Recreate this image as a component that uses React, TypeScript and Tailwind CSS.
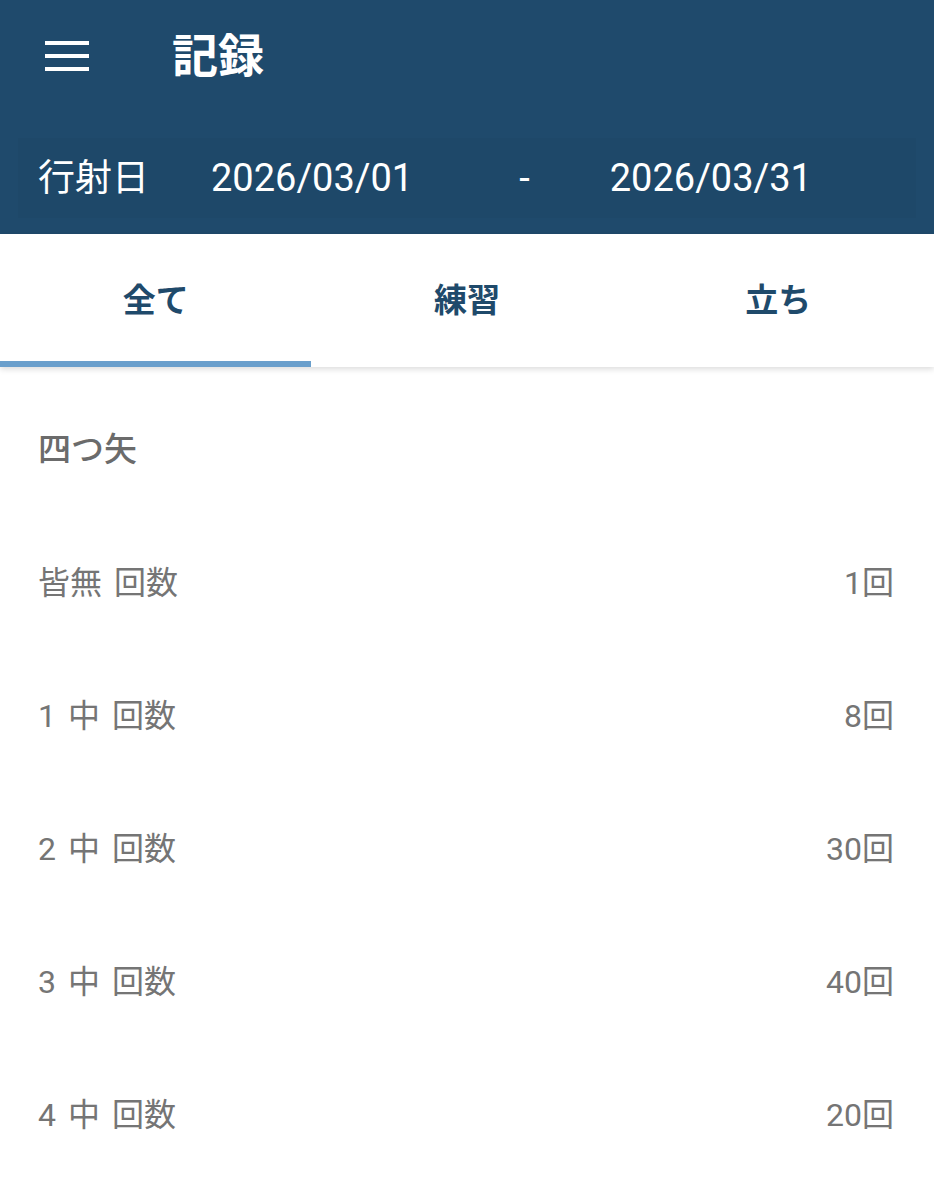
import React from "react";

const rows = [
  { label: "皆無 回数", value: "1回" },
  { label: "1 中 回数", value: "8回" },
  { label: "2 中 回数", value: "30回" },
  { label: "3 中 回数", value: "40回" },
  { label: "4 中 回数", value: "20回" },
];

export default function App() {
  const font = { fontFamily: 'Roboto, "Noto Sans CJK JP", sans-serif' };
  return (
    <div className="w-[934px] h-[1200px] bg-white overflow-hidden" style={font}>
      <header className="bg-[#1f4a6c] h-[234px] flex flex-col">
        <div className="h-[112px] flex items-center pl-[45px]">
          <div className="w-[44px] flex flex-col gap-[9px]">
            <div className="h-[4px] bg-white" />
            <div className="h-[4px] bg-white" />
            <div className="h-[4px] bg-white" />
          </div>
          <div className="ml-[83px] text-white text-[46px] font-bold leading-none">記録</div>
        </div>
        <div className="mt-[26px] mx-[18px] h-[80px] bg-[#1e4869] flex items-center text-white text-[38px] leading-none">
          <span className="ml-[20px] text-[37px]">行射日</span>
          <span className="ml-[62px]">2026/03/01</span>
          <span className="ml-[106px]">-</span>
          <span className="ml-[80px]">2026/03/31</span>
        </div>
      </header>
      <div className="relative z-10 bg-white shadow-[0_2px_6px_rgba(0,0,0,0.15)]">
        <div className="grid grid-cols-3 h-[133px]">
          {["全て", "練習", "立ち"].map((t, i) => (
            <div key={t} className="relative flex items-center justify-center">
              <span className="text-[#1f4a6b] text-[33px] font-bold leading-none">{t}</span>
              {i === 0 && <div className="absolute left-0 right-0 bottom-0 h-[6px] bg-[#6a9fcc]" />}
            </div>
          ))}
        </div>
      </div>
      <div className="pt-[16px]">
        <div className="h-[133px] flex items-center px-[38px] text-[33px] font-medium text-[#6b6b6b] leading-none">
          四つ矢
        </div>
        {rows.map((r) => (
          <div key={r.label} className="h-[133px] flex items-center justify-between pl-[38px] pr-[40px] text-[32px] text-[#757575] leading-none">
            <span className="whitespace-pre">{r.label.split(" ").map((w, i, a) => (
              <React.Fragment key={i}>
                {w}
                {i < a.length - 1 && <span className="inline-block w-[12px]" />}
              </React.Fragment>
            ))}</span>
            <span>{r.value}</span>
          </div>
        ))}
      </div>
    </div>
  );
}
